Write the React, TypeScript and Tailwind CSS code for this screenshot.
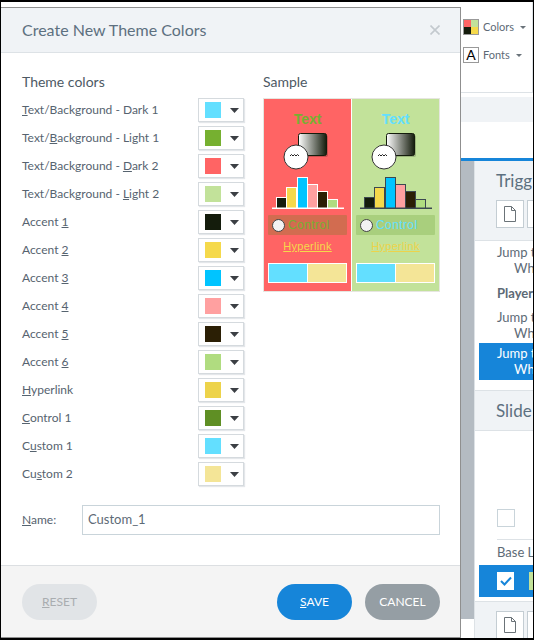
const font = { fontFamily: 'Lato, sans-serif' };

const rows = [
  { pre: "", u: "T", post: "ext/Background - Dark 1", color: "bg-[#63dfff]" },
  { pre: "Text/", u: "B", post: "ackground - Light 1", color: "bg-[#76b030]" },
  { pre: "Text/Background - ", u: "D", post: "ark 2", color: "bg-[#ff6464]" },
  { pre: "Text/Background - ", u: "L", post: "ight 2", color: "bg-[#c2e29a]" },
  { pre: "Accent ", u: "1", post: "", color: "bg-[#141c0c]" },
  { pre: "Accent ", u: "2", post: "", color: "bg-[#f5d94b]" },
  { pre: "Accent ", u: "3", post: "", color: "bg-[#00c4ff]" },
  { pre: "Accent ", u: "4", post: "", color: "bg-[#ffa0a0]" },
  { pre: "Accent ", u: "5", post: "", color: "bg-[#2b1f05]" },
  { pre: "Accent ", u: "6", post: "", color: "bg-[#b0dc80]" },
  { pre: "", u: "H", post: "yperlink", color: "bg-[#edd34a]" },
  { pre: "", u: "C", post: "ontrol 1", color: "bg-[#5f8f24]" },
  { pre: "C", u: "u", post: "stom 1", color: "bg-[#63dfff]" },
  { pre: "Cu", u: "s", post: "tom 2", color: "bg-[#f4e597]" },
];

const bars = [
  { x: 12, y: 98, fill: "#141c0c" },
  { x: 22, y: 88, fill: "#f5d94b" },
  { x: 33, y: 78, fill: "#00c4ff" },
  { x: 43, y: 85, fill: "#ffa0a0" },
  { x: 53, y: 92, fill: "#2b1f05" },
  { x: 63, y: 100, fill: "#b0dc80" },
];

function SamplePanel({ id, bg, textColor, line, controlBg, linkColor }: { id: string; bg: string; textColor: string; line: string; controlBg: string; linkColor: string }) {
  return (
    <div className={`flex h-[192px] w-[87px] flex-col items-center ${bg}`}>
      <div className={`mt-[12px] text-[14px] leading-[17px] ${textColor}`} style={{ fontFamily: '"Liberation Sans", sans-serif', fontWeight: 700 }}>
        Text
      </div>
      <svg width="87" height="80" viewBox="0 31 87 80" className="mt-[2px] shrink-0">
        <defs>
          <linearGradient id={id}>
            <stop offset="0" stopColor="#ffffff" />
            <stop offset="1" stopColor="#141c0c" />
          </linearGradient>
        </defs>
        <rect x="36" y="36" width="28" height="22" rx="2" fill="#000" opacity="0.2" />
        <rect x="34.5" y="34.5" width="28" height="22" rx="2" fill={`url(#${id})`} stroke="#141c0c" />
        <circle cx="32" cy="58" r="12" fill="#fff" stroke="#333" strokeWidth="1" />
        <path d="M26 57l1.5-1.5 1.5 1.5 1.5-1.5 1.5 1.5 1.5-1.5 1.5 1.5" fill="none" stroke="#222" strokeWidth="1" />
        {bars.map((b) => (
          <rect key={b.x} x={b.x + 0.5} y={b.y + 0.5} width={10} height={109 - b.y} fill={b.fill} stroke={line} />
        ))}
        <rect x="8" y="108.5" width="72" height="1.5" fill={line} />
      </svg>
      <div className={`mt-[5px] flex h-[20px] w-[79px] items-center rounded-[1px] pl-[4px] ${controlBg}`}>
        <div className="h-[13px] w-[13px] rounded-full border border-[#444] bg-[#f2f2f2]" />
        <span className={`ml-[3px] text-[12px] tracking-[0.4px] ${textColor}`} style={{ fontFamily: '"Liberation Sans", sans-serif' }}>
          Control
        </span>
      </div>
      <div className={`mt-[4px] text-[11px] leading-[14px] tracking-[0.3px] underline ${linkColor}`} style={{ fontFamily: '"Liberation Sans", sans-serif' }}>
        Hyperlink
      </div>
      <div className="mt-[10px] flex h-[20px] w-[79px] border border-white">
        <div className="w-[39px] border-r border-white bg-[#63dfff]" />
        <div className="flex-1 bg-[#f4e597]" />
      </div>
    </div>
  );
}

function PageIcon() {
  return (
    <div className="flex h-[28px] w-[28px] shrink-0 items-center justify-center border border-[#c4cdd3] bg-white">
      <svg width="14" height="18" viewBox="0 0 14 18" fill="none" stroke="#6b7378">
        <path d="M1.5 1.5h7l4 4v11h-11zM8.5 1.5v4h4" />
      </svg>
    </div>
  );
}

export default function App() {
  return (
    <div className="flex h-[640px] w-[534px] overflow-hidden border-t-2 border-r border-b-2 border-l border-black bg-white" style={font}>
      {/* dialog */}
      <div className="mt-[5px] flex h-[631px] w-[460px] shrink-0 flex-col border-t border-r border-b border-[#8f8f8f] bg-white">
        <div className="flex h-[45px] shrink-0 items-center justify-between border-b border-[#dde2e6] bg-[#f0f3f6] pr-[20px] pl-[21px]">
          <span className="text-[16px] text-[#5d7080]">Create New Theme Colors</span>
          <svg width="10" height="10" viewBox="0 0 10 10" stroke="#c3c9ce" strokeWidth="1.6">
            <path d="M0.5 0.5l9 9M9.5 0.5l-9 9" />
          </svg>
        </div>
        <div className="flex flex-1 flex-col pl-[21px]">
          <div className="mt-[19px] flex">
            <div className="w-[222px]">
              <div className="text-[14px] leading-[20px] text-[#4d5964]">Theme colors</div>
              <div className="mt-[6px] flex flex-col gap-[4px]">
                {rows.map((r) => (
                  <div key={r.pre + r.u + r.post} className="flex h-[24px] items-center justify-between">
                    <span className="text-[12px] text-[#56636f]">
                      {r.pre}
                      <u>{r.u}</u>
                      {r.post}
                    </span>
                    <div className="flex h-[24px] w-[46px] items-center justify-between border border-[#d5dade] pr-[4px] pl-[6px] shadow-[1px_1px_1px_#e4e7ea]">
                      <div className={`h-[16px] w-[16px] ${r.color}`} />
                      <svg width="9" height="5" viewBox="0 0 9 5" fill="#3b3f44">
                        <path d="M0 0h9l-4.5 5z" />
                      </svg>
                    </div>
                  </div>
                ))}
              </div>
            </div>
            <div className="ml-[19px]">
              <div className="text-[14px] leading-[20px] text-[#4d5964]">Sample</div>
              <div className="mt-[6px] flex gap-px border border-[#e6e6e0] bg-white">
                <SamplePanel id="grad-a" bg="bg-[#ff6464]" textColor="text-[#76b030]" line="#ffffff" controlBg="bg-[#d26c50]" linkColor="text-[#f5d94b]" />
                <SamplePanel id="grad-b" bg="bg-[#c2e29a]" textColor="text-[#63dfff]" line="#3c4850" controlBg="bg-[#a9cf7d]" linkColor="text-[#edd34a]" />
              </div>
            </div>
          </div>
          <div className="mt-[19px] flex items-center">
            <span className="w-[60px] text-[12px] text-[#56636f]">
              <u>N</u>ame:
            </span>
            <div className="flex h-[30px] w-[358px] items-center border border-[#c9d4da] pl-[5px] text-[13px] text-[#5d6a76]">Custom_1</div>
          </div>
        </div>
        <div className="flex h-[72px] shrink-0 items-center border-t border-[#dcdfe2] bg-[#f4f4f4] pr-[20px] pl-[21px]">
          <div className="flex h-[36px] w-[75px] items-center justify-center rounded-full bg-[#e1e4e7] text-[12px] text-[#a9adb0]">
            <span>
              <u>R</u>ESET
            </span>
          </div>
          <div className="ml-auto flex h-[36px] w-[75px] items-center justify-center rounded-full bg-[#1685d9] text-[12px] text-white">
            <span>
              <u>S</u>AVE
            </span>
          </div>
          <div className="ml-[13px] flex h-[36px] w-[75px] items-center justify-center rounded-full bg-[#959ea4] text-[12px] text-white">CANCEL</div>
        </div>
      </div>

      {/* app behind the dialog */}
      <div className="flex min-w-0 flex-1 flex-col overflow-hidden whitespace-nowrap">
        <div className="flex h-[91px] shrink-0 flex-col border-r border-b border-[#dde2e6] pt-[17px] pl-[2px] text-[11px] leading-[16px] text-[#5d6a76]">
          <div className="flex items-center">
            <div className="grid h-[16px] w-[16px] grid-cols-2 grid-rows-2 border border-[#999]">
              <div className="bg-[#ff6464]" />
              <div className="bg-[#c2e29a]" />
              <div className="bg-[#141c0c]" />
              <div className="bg-[#f5d94b]" />
            </div>
            <span className="ml-[4px]">Colors</span>
            <svg className="ml-[6px]" width="6" height="3" viewBox="0 0 6 3" fill="#6a737a">
              <path d="M0 0h6l-3 3z" />
            </svg>
          </div>
          <div className="mt-[12px] flex items-center">
            <div className="flex h-[16px] w-[16px] items-center justify-center border border-[#999] text-[14px] leading-none text-black">A</div>
            <span className="ml-[4px]">Fonts</span>
            <svg className="ml-[6px]" width="6" height="3" viewBox="0 0 6 3" fill="#6a737a">
              <path d="M0 0h6l-3 3z" />
            </svg>
          </div>
        </div>
        <div className="mt-[4px] h-[25px] shrink-0 bg-[#f0f3f6]" />
        <div className="h-[39px] shrink-0 border-b-[3px] border-[#1685d9]" />
        <div className="flex min-h-0 flex-1">
          <div className="flex w-[13px] shrink-0 flex-col">
            <div className="h-[458px] bg-[#b4bbc2]" />
          </div>
          <div className="flex min-w-0 flex-1 flex-col overflow-hidden border-l border-[#dde2e6]">
            <div className="h-[80px] shrink-0 border-b border-[#dde2e6] bg-[#f0f3f6] pl-[21px]">
              <div className="mt-[8px] text-[17px] leading-[24px] text-[#5d7080]">Trigg</div>
              <div className="mt-[7px] flex gap-[3px]">
                <PageIcon />
                <PageIcon />
              </div>
            </div>
            <div className="pt-[3px] pl-[22px] text-[13px] leading-[16px] text-[#5d6a76]">
              <div>Jump t</div>
              <div className="pl-[17px]">Wh</div>
              <div className="mt-[7px] leading-[20px] font-bold">Player</div>
              <div className="mt-[6px]">Jump t</div>
              <div className="pl-[17px]">Wh</div>
            </div>
            <div className="mt-[2px] ml-[4px] h-[37px] shrink-0 bg-[#1685d9] pt-[2px] pl-[18px] text-[13px] leading-[16px] text-white">
              <div>Jump t</div>
              <div className="pl-[17px]">Wh</div>
            </div>
            <div className="mt-[10px] flex h-[41px] shrink-0 items-center border-y border-[#dde2e6] bg-[#f0f3f6] pl-[21px] text-[17px] text-[#5d7080]">Slide</div>
            <div className="mt-[78px] ml-[22px] h-[18px] w-[18px] shrink-0 border border-[#c9d4da]" />
            <div className="mt-[12px] ml-[22px] h-px shrink-0 bg-[#dde2e6]" />
            <div className="ml-[22px] py-[3px] text-[13px] leading-[18px] text-[#5d6a76]">Base L</div>
            <div className="mt-[1px] ml-[4px] flex h-[32px] shrink-0 items-center bg-[#1685d9] pl-[18px]">
              <div className="flex h-[18px] w-[18px] items-center justify-center bg-white">
                <svg width="12" height="10" viewBox="0 0 12 10" fill="none" stroke="#1685d9" strokeWidth="2">
                  <path d="M1 5l3.5 3.5L11 1.5" />
                </svg>
              </div>
              <div className="ml-[15px] h-[18px] w-[4px] bg-[#c2e29a]" />
            </div>
            <div className="mt-[4px] flex-1 border-t border-[#dde2e6] bg-[#f0f3f6] pt-[9px] pl-[21px]">
              <div className="flex gap-[3px]">
                <PageIcon />
                <PageIcon />
              </div>
            </div>
          </div>
        </div>
      </div>
    </div>
  );
}
